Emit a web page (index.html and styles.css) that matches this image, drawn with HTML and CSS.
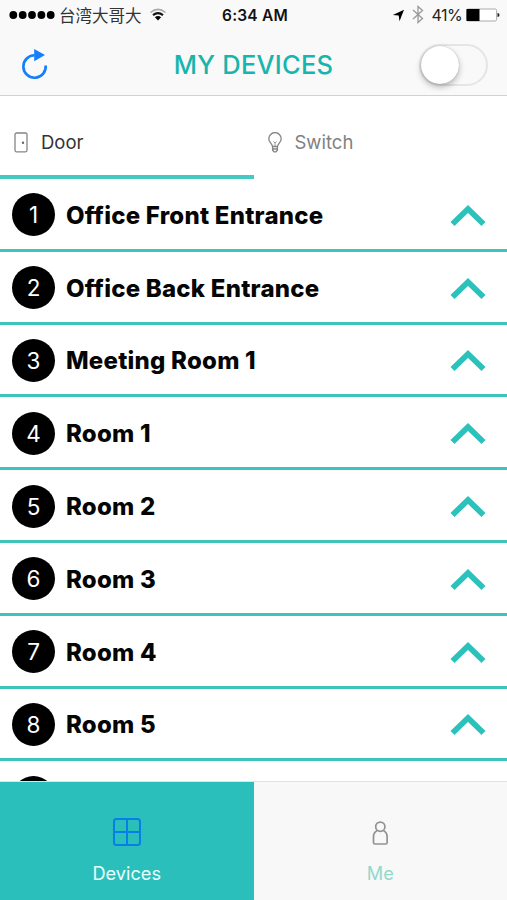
FILE: index.html
```html
<!DOCTYPE html>
<html lang="en">
<head>
<meta charset="utf-8">
<title>My Devices</title>
<link rel="stylesheet" href="styles.css">
</head>
<body>
<svg class="defs" width="0" height="0"><defs>
<symbol id="chevron" viewBox="0 0 36 24"><path d="M2.500 21 18 6l15.500 15" fill="none" stroke="#2bc2bc" stroke-width="5.800"/></symbol>
</defs></svg>
<div class="app">
<header class="header">
  <div class="status">
    <div class="carrier">
      <svg width="46" height="10" viewBox="0 0 46 10"><g fill="#000"><circle cx="4.300" cy="5" r="3.900"/><circle cx="13.700" cy="5" r="3.900"/><circle cx="23" cy="5" r="3.900"/><circle cx="32.400" cy="5" r="3.900"/><circle cx="41.700" cy="5" r="3.900"/></g></svg>
      <span class="carrier-name">台湾大哥大</span>
      <svg class="wifi" width="18" height="13" viewBox="0 0 18 13"><path d="M1.500 4.500Q9-1.800 16.500 4.500" fill="none" stroke="#aaa" stroke-width="1.600"/><path d="M4 7.100Q9 3.100 14 7.100" fill="none" stroke="#111" stroke-width="2"/><path d="M5.900 9.300Q9 6.700 12.100 9.300L9 12.500z"/></svg>
    </div>
    <span class="time">6:34 AM</span>
    <div class="power">
      <svg width="13" height="13" viewBox="0 0 13 13"><path d="M12 .8 7.500 12.200 6.700 6.600.8 5.900z"/></svg>
      <svg class="bluetooth" width="12" height="19" viewBox="0 0 12 19"><path d="M1 5l9.500 8.500L6 17.500V1.500l4.500 4L1 14" fill="none" stroke="#999" stroke-width="1.300"/></svg>
      <span class="percent">41%</span>
      <svg class="battery" width="34" height="14" viewBox="0 0 34 14"><rect x=".6" y="1" width="30" height="12" rx="1.500" fill="#fff" stroke="#aaa"/><path d="M.5 1H13.500v12H.5z"/><path d="M31.500 5q2 0 2 2t-2 2z" fill="#222"/></svg>
    </div>
  </div>
  <div class="navbar">
    <svg class="refresh" width="28" height="32" viewBox="0 0 28 32"><path d="M13.500 7.300A11.200 11.200 0 1 0 24.700 17.500" fill="none" stroke="#147efb" stroke-width="2.600"/><path d="M13.200 1v12.200L24 7.100z" fill="#147efb"/></svg>
    <h1 class="title">MY DEVICES</h1>
    <div class="toggle"><div class="knob"></div></div>
  </div>
</header>
<nav class="tabs">
  <div class="tab active"><svg width="14" height="21" viewBox="0 0 14 21"><rect x="1" y="1" width="12" height="18.800" rx="1.500" fill="none" stroke="#858585" stroke-width="1.300"/><circle cx="9" cy="10.800" r="1.200" fill="#666"/></svg><span>Door</span></div>
  <div class="tab"><svg width="14" height="21" viewBox="0 0 14 21"><g fill="none" stroke="#858585" stroke-width="1.300"><path d="M4.500 14.500C4.200 11.500.8 10.500.8 6.800a6.200 6.200 0 0 1 12.400 0c0 3.700-3.400 4.700-3.700 7.700zM4.600 15v3.200L6 19.800h2l1.400-1.600V15M5 17h4"/><path d="M5.500 9.500 7 11l1.500-1.500M7 11v3" stroke-width=".8"/></g></svg><span>Switch</span></div>
</nav>
<main class="list">
  <div class="row"><span class="num">1</span><span class="name">Office Front Entrance</span><svg class="chev"><use href="#chevron"/></svg></div>
  <div class="row"><span class="num">2</span><span class="name">Office Back Entrance</span><svg class="chev"><use href="#chevron"/></svg></div>
  <div class="row"><span class="num">3</span><span class="name">Meeting Room 1</span><svg class="chev"><use href="#chevron"/></svg></div>
  <div class="row"><span class="num">4</span><span class="name">Room 1</span><svg class="chev"><use href="#chevron"/></svg></div>
  <div class="row"><span class="num">5</span><span class="name">Room 2</span><svg class="chev"><use href="#chevron"/></svg></div>
  <div class="row"><span class="num">6</span><span class="name">Room 3</span><svg class="chev"><use href="#chevron"/></svg></div>
  <div class="row"><span class="num">7</span><span class="name">Room 4</span><svg class="chev"><use href="#chevron"/></svg></div>
  <div class="row"><span class="num">8</span><span class="name">Room 5</span><svg class="chev"><use href="#chevron"/></svg></div>
  <div class="row"><span class="num"></span></div>
</main>
<footer class="bottom">
  <div class="item selected"><svg width="28" height="28" viewBox="0 0 28 28"><g fill="none" stroke="#087fe8" stroke-width="2"><rect x="1" y="1" width="26" height="26" rx="2.500"/><path d="M14 1v26M1 14h26"/></g></svg><span>Devices</span></div>
  <div class="item me"><svg width="28" height="28" viewBox="0 0 28 28"><g fill="none" stroke="#929292" stroke-width="1.700"><circle cx="14.300" cy="8.700" r="4.600"/><path d="M11.300 12.500C8.500 13.700 7.500 16 7.500 19v5.500q0 1.500 1.500 1.500h10.600q1.500 0 1.500-1.500V19c0-3-1-5.300-3.800-6.500"/></g></svg><span>Me</span></div>
</footer>
</div>
</body>
</html>
```
FILE: styles.css
```css
* { box-sizing: border-box; }
body { margin: 0; font-family: Inter, "Noto Sans CJK SC", sans-serif; background: #fff; }
svg { display: block; flex: none; }
.defs { height: 0; }
.app { height: 900px; display: flex; flex-direction: column; overflow: hidden; }
.header { height: 96px; flex: none; background: #f9f9f9; border-bottom: 1px solid #d2d2d2; }
.status { height: 30px; display: grid; grid-template-columns: 1fr auto 1fr; align-items: center; padding: 0 7px 0 9px; }
.carrier, .power { display: flex; align-items: center; }
.carrier-name { font: 400 16.500px/20px "Noto Sans CJK SC", sans-serif; margin-left: 4px; color: #333; }
.wifi { margin-left: 7px; margin-top: -2px; }
.time { font-size: 15.500px; font-weight: 600; letter-spacing: 0.200px; margin-left: 1px; color: #111; }
.power { justify-content: flex-end; }
.bluetooth { margin-left: 7px; margin-top: -1px; }
.percent { font-size: 16px; letter-spacing: -0.600px; margin-left: 8px; color: #222; }
.battery { margin-left: 4px; }
.navbar { height: 65px; display: flex; align-items: center; justify-content: space-between; padding: 5px 19px 0 21px; }
.refresh { margin-top: -3px; }
.title { margin: -1px 0 0 39px; font-size: 25.500px; font-weight: 500; letter-spacing: 0.250px; color: #17b5ae; line-height: 32px; white-space: nowrap; }
.toggle { width: 69px; height: 42px; border: 2px solid #e5e5e5; border-radius: 21px; }
.knob { width: 38px; height: 38px; border-radius: 50%; background: #fff; box-shadow: 0 3px 6px rgba(0,0,0,.28), 0 0 1px rgba(0,0,0,.3); }
.tabs { height: 83px; flex: none; display: grid; grid-template-columns: 1fr 1fr; }
.tab { display: flex; align-items: center; padding: 13px 0 0 14px; border-bottom: 4px solid transparent; font-size: 18.500px; color: #818181; }
.tab span { margin: 0 0 0 13px; }
.tab.active { border-color: #45c9c3; color: #333; }
.list { flex: 1; min-height: 0; overflow: hidden; }
.row { height: 72.800px; display: flex; align-items: center; padding: 2px 21px 0 12px; border-bottom: 3px solid #3ec4bd; }
.num { width: 43px; height: 43px; border-radius: 50%; background: #000; color: #fff; font-size: 22.500px; line-height: 44px; text-align: center; flex: none; }
.name { margin: 1px 0 0 11px; font-size: 24px; font-weight: 800; letter-spacing: 0.230px; color: #050505; white-space: nowrap; }
.chev { width: 36px; height: 24px; margin-left: auto; }
.bottom { height: 119px; flex: none; display: grid; grid-template-columns: 1fr 1fr; background: #f8f8f8; border-top: 1px solid #e2e2e2; }
.item { display: flex; flex-direction: column; align-items: center; padding-top: 36px; font-size: 18.200px; color: #93d8cc; }
.item span { margin-top: 15px; line-height: 24px; }
.selected { background: #2bbfbb; color: #e8ffff; }
```
